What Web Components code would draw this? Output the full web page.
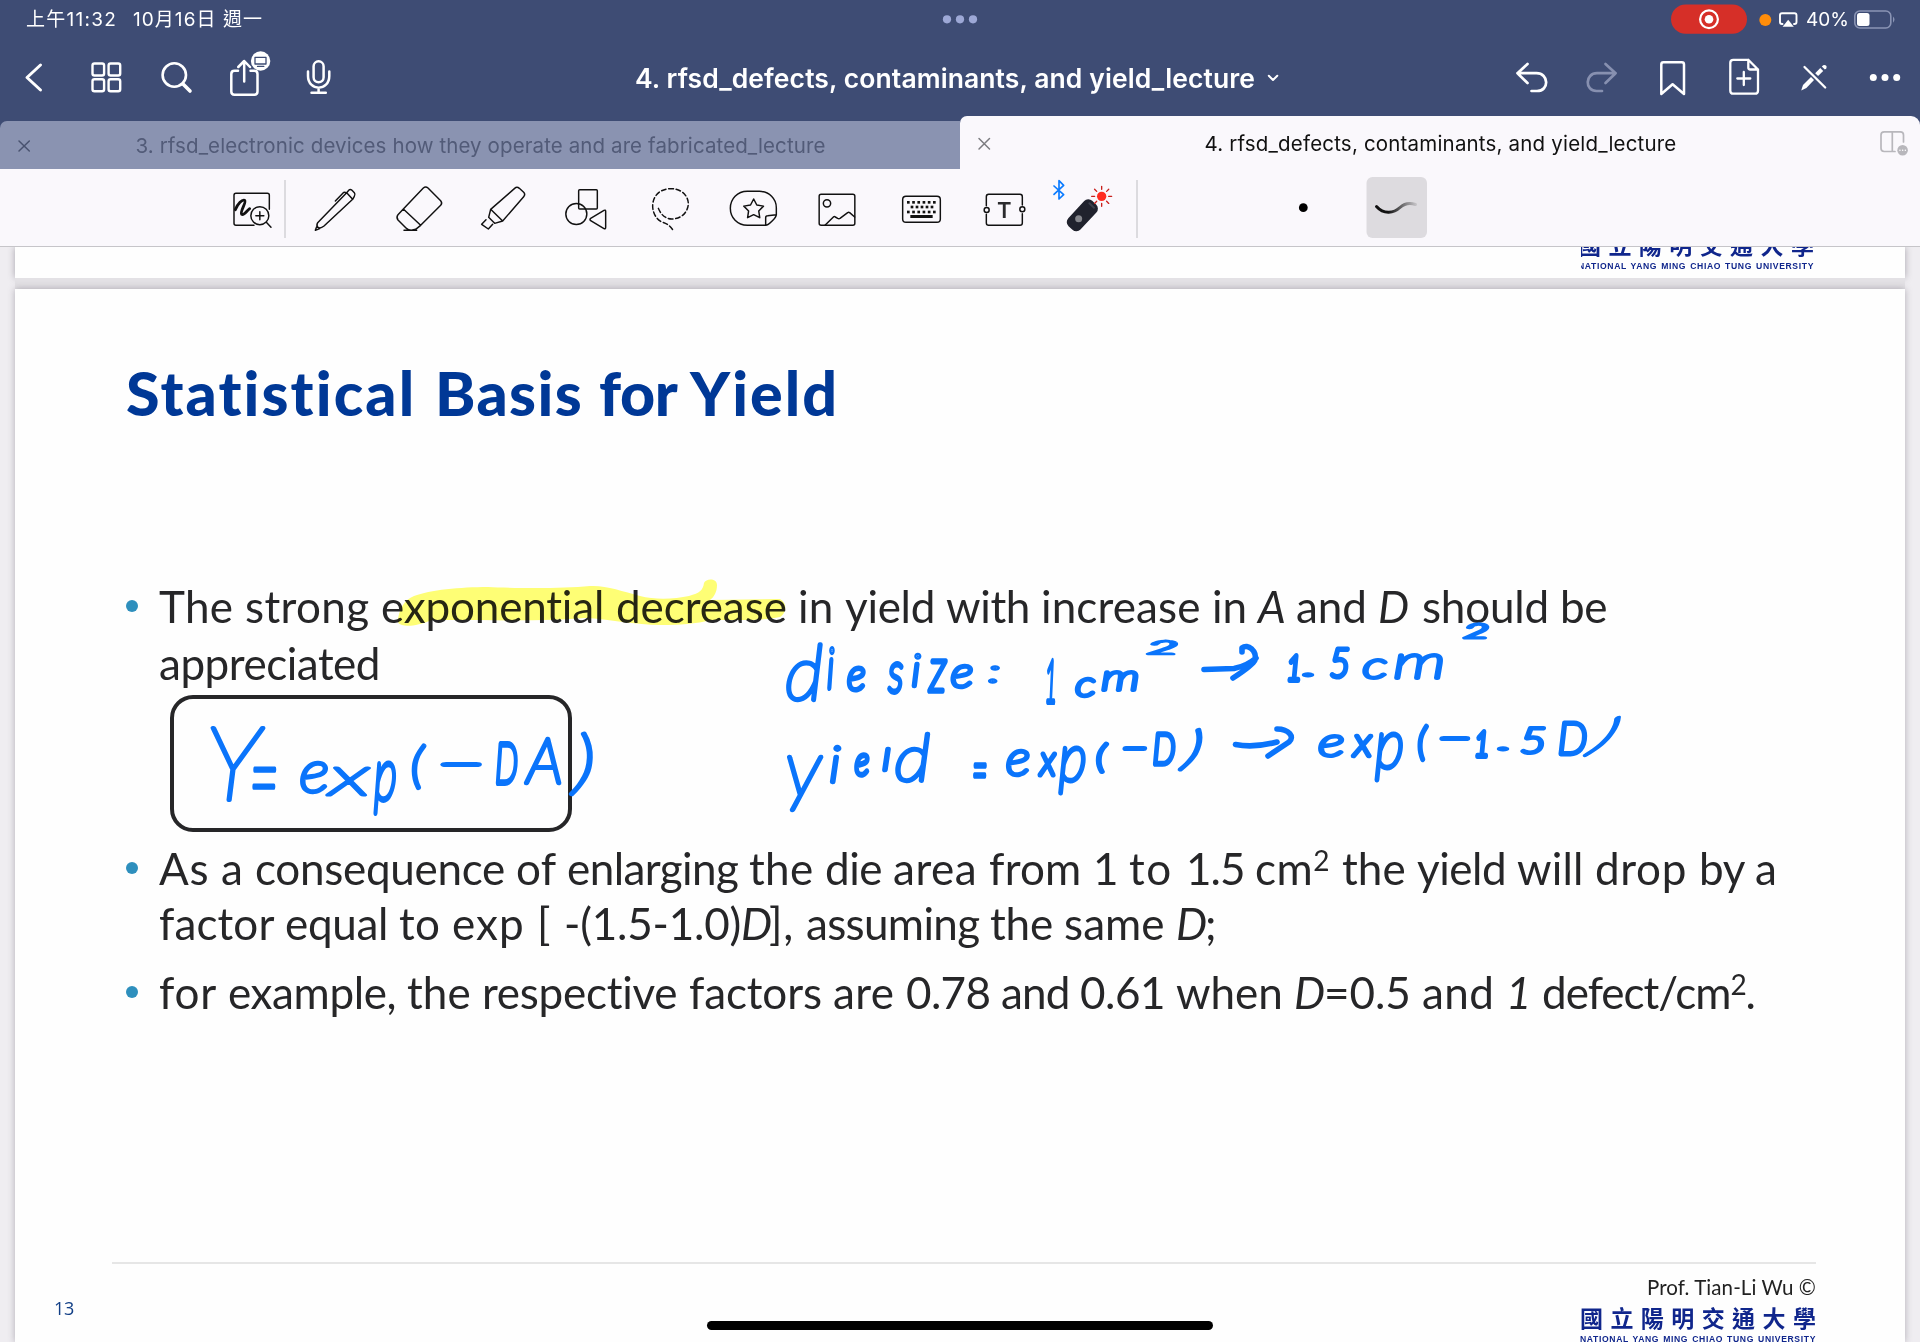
<!DOCTYPE html>
<html lang="zh-Hant">
<head>
<meta charset="utf-8">
<title>Notes</title>
<style>
html,body{margin:0;padding:0;height:100%;overflow:hidden;background:#f1eff3}
</style>
</head>
<body>
<note-app></note-app>
<script>
const define = (name, css, html, after) => customElements.define(name, class extends HTMLElement {
  connectedCallback() {
    if (this.shadowRoot) return;
    const root = this.attachShadow({mode: 'open'});
    root.innerHTML = `<style>${css}</style>${typeof html === 'function' ? html(this) : html}`;
    if (after) after(this, root);
  }
});

/* Text whose letter spacing is adjusted to fill its measure */
define('fit-text', `:host{display:block;white-space:pre;flex:none}span{display:inline-block;white-space:pre}`,
  '<span><slot></slot></span>', (el, root) => {
    const w = +el.getAttribute('w');
    el.style.width = w + 'px';
    const s = root.querySelector('span');
    const n = [...el.textContent].length;
    const nat = s.getBoundingClientRect().width;
    s.style.letterSpacing = ((w - nat) / n) + 'px';
  });

/* One line of slide text; each run starts at its own tab stop */
const LINES = {
  title: [['Statistical ',125],['Basis ',434],['for ',598],['Yield',689],['',838]],
  l1: [['The strong ',160],['exponential ',382],['decrease ',617],['in ',799],['yield ',846],['with ',947],['increase ',1042],['in ',1213],['A ',1259,1],['and ',1297],['D ',1379,1],['should ',1423],['be',1561],['',1608]],
  l2: [['appreciated',160],['',381]],
  l3: [['As ',160],['a ',222],['consequence ',256],['of ',517],['enlarging ',568],['the ',750],['die ',826],['area ',894],['from ',990],['1 ',1094],['to ',1130],['1.5 ',1187],['cm<sup>2</sup> ',1256],['the ',1343],['yield ',1418],['will ',1518],['drop ',1596],['by ',1700],['a',1756],['',1778]],
  l4: [['factor ',160],['equal ',286],['to ',400],['exp ',453],['[ ',538],['-(1.5-1.0)',565],['D',742,1],['], ',770],['assuming ',807],['the ',991],['same ',1065],['D',1177,1],[';',1206],['',1218]],
  l5: [['for ',160],['example, ',229],['the ',408],['respective ',483],['factors ',690],['are ',834],['0.78 ',907],['and ',1002],['0.61 ',1081],['when ',1177],['D',1295,1],['=0.5 ',1325],['and ',1423],['1 ',1507,1],['defect/cm<sup>2</sup>.',1543],['',1756]]
};
define('slide-line', `:host{display:flex;font:400 44px/52px Lato,sans-serif;color:#262628;height:52px}
  :host([run=title]){font:900 61px/72px Lato,sans-serif;color:#003896;height:72px}
  .i{font-style:italic}sup{font-size:28px;line-height:0;vertical-align:14px}`,
  el => {
    const L = LINES[el.getAttribute('run')];
    return L.slice(0, -1).map((r, i) => `<fit-text class="${r[2] ? 'i' : ''}" w="${L[i+1][1] - r[1]}">${r[0]}</fit-text>`).join('');
  });

define('bullet-item', `:host{display:grid;grid-template-columns:33px 1fr;}
  i{width:12px;height:12px;border-radius:50%;background:#2e8fbd;margin-top:20px}`,
  '<i></i><div><slot></slot></div>');

/* Icon cell: a slice of its bar, drawn in the bar's own coordinates */
const C4 = s => `<g transform="translate(150 170) scale(.33333)" stroke-width="4.4">${s}</g>`;
const C5 = s => `<g transform="translate(650 170) scale(.33333)" stroke-width="4.4">${s}</g>`;
const starPath = (cx, cy, R, r) => 'M' + Array.from({length: 10}, (_, i) => {
  const a = -Math.PI / 2 + i * Math.PI / 5, q = i % 2 ? r : R;
  return (cx + q * Math.cos(a)).toFixed(1) + ' ' + (cy + q * Math.sin(a)).toFixed(1);
}).join('L') + 'Z';
const keys = () => {
  let s = '';
  for (let i = 0; i < 6; i++) s += `<rect x="${771 + i*15.6}" y="93" width="8" height="8"/><rect x="${771 + i*15.6}" y="122" width="8" height="8"/>`;
  for (let i = 0; i < 5; i++) s += `<rect x="${782 + i*15}" y="107" width="8" height="8"/>`;
  return s;
};
const rays = () => Array.from({length: 8}, (_, i) => {
  const a = i * Math.PI / 4, c = Math.cos(a), s = Math.sin(a);
  return `M${1355 + 21*c} ${79 + 21*s}L${1355 + 30*c} ${79 + 30*s}`;
}).join('');
const ICONS = {
  back: '<path d="M40.5 65L27 77.5L40.5 90" stroke-width="3"/>',
  grid: '<g stroke-width="2.4"><rect x="92.5" y="63.5" width="11.6" height="12" rx="2"/><rect x="108.6" y="63.5" width="11.6" height="12" rx="2"/><rect x="92.5" y="79.3" width="11.6" height="12" rx="2"/><rect x="108.6" y="79.3" width="11.6" height="12" rx="2"/></g>',
  search: '<circle cx="174.3" cy="75" r="11.7" stroke-width="2.6"/><path d="M183 84L190 91" stroke-width="3.6"/>',
  share: '<path d="M238 70.8H234.5Q231.3 70.8 231.3 74V91.5Q231.3 94.7 234.5 94.7H254.3Q257.5 94.7 257.5 91.5V74Q257.5 70.8 254.3 70.8H250.5M244.2 81.5V61.5M238.3 67L244.2 61L250 67" stroke-width="2.5"/><circle cx="260.6" cy="61" r="9.7" fill="#fff" stroke="none"/><path d="M255 57.3H266V64H255ZM257.5 66.4H263.8" stroke="#3e4c74" stroke-width="1.3"/>',
  mic: '<rect x="313.6" y="61.3" width="10" height="21" rx="5" stroke-width="2.5"/><path d="M308 71.5V76C308 91.5 329.3 91.5 329.3 76V71.5M318.6 88V92.4M311.5 92.8H325.8" stroke-width="2.5"/>',
  chev: '<path d="M1268.8 75.8L1273 80L1277.3 75.8" stroke-width="2"/>',
  undo: '<path d="M1527.5 64L1517.5 73.2L1527.5 83M1517.5 73.2H1536.5C1549 73.2 1549.5 91 1537 91H1531.5" stroke-width="2.7"/>',
  redo: '<path d="M1605.5 64L1615.6 73.2L1605.5 83M1615.6 73.2H1597C1585 73.2 1584.5 91 1596.5 91H1602" stroke-width="2.7" stroke="#8790b0"/>',
  mark: '<path d="M1661.3 94V64.5Q1661.3 62.3 1663.5 62.3H1681.8Q1684 62.3 1684 64.5V94L1672.6 84.3Z" stroke-width="2.5"/>',
  add: '<path d="M1748.3 59.8H1733.3Q1730.3 59.8 1730.3 62.8V90.7Q1730.3 93.7 1733.3 93.7H1755Q1758 93.7 1758 90.7V69.5L1748.3 59.8V67.5Q1748.3 69.5 1750.3 69.5H1758M1743.8 72V85M1737.3 78.5H1750.3" stroke-width="2.3"/>',
  cross: '<path d="M1804.5 67L1825.2 87.5" stroke-width="2.3"/><g fill="#fff" stroke="none"><path d="M1801.2 90.4L1803 85L1811 77L1814 80L1806.4 88Z"/><path d="M1815.2 73.2L1820.3 68L1823.2 70.9L1818.1 76Z"/><path d="M1821.8 66.6L1823.2 65.2Q1824.8 64.4 1826 65.6Q1827.2 67 1826.3 68.2L1824.9 69.6Z"/></g>',
  dots: '<g fill="#fff" stroke="none"><circle cx="1873.3" cy="77.4" r="3.5"/><circle cx="1885" cy="77.4" r="3.5"/><circle cx="1896.7" cy="77.4" r="3.5"/></g>',
  multi: '<g fill="#9da8d6" stroke="none"><circle cx="947" cy="19.3" r="4.1"/><circle cx="960" cy="19.3" r="4.1"/><circle cx="973" cy="19.3" r="4.1"/></g>',
  rec: '<rect x="1671" y="4.5" width="76" height="29.3" rx="14.6" fill="#d62f28" stroke="none"/><circle cx="1709" cy="19.3" r="8.9" stroke-width="2.2"/><circle cx="1709" cy="19.3" r="4.3" fill="#fff" stroke="none"/><circle cx="1765.3" cy="19.9" r="6" fill="#ff8d0a" stroke="none"/><path d="M1782.5 24H1782Q1780 24 1780 22V15.3Q1780 13.3 1782 13.3H1794.5Q1796.5 13.3 1796.5 15.3V22Q1796.5 24 1794.5 24H1794" stroke-width="1.9"/><path d="M1788.2 19.8L1793.8 26.8H1782.6Z" fill="#fff" stroke="none"/>',
  bat: '<rect x="1854.8" y="11" width="36" height="17" rx="5" stroke="#8a94b4" stroke-width="1.6"/><rect x="1857" y="13" width="12.5" height="13" rx="2.5" fill="#fff" stroke="none"/><path d="M1893 16.5Q1896 19.5 1893 22.7Z" fill="#8a94b4" stroke="none"/>',
  x1: '<path d="M19 140.5L29.3 150.5M29.3 140.5L19 150.5" stroke="#49526f" stroke-width="1.5"/>',
  x2: '<path d="M979 138.5L989.5 149M989.5 138.5L979 149" stroke="#7c7c80" stroke-width="1.5"/>',
  win: '<g stroke="#b8b7bc" stroke-width="1.7"><path d="M1895 151.5H1884.2Q1881 151.5 1881 148.3V135Q1881 131.8 1884.2 131.8H1900.3Q1903.5 131.8 1903.5 135V142M1892.3 131.8V151.5"/><circle cx="1902.6" cy="150.2" r="5.3" fill="#b8b7bc" stroke="none"/><path d="M1899.9 150.2h.1M1902.6 150.2h.1M1905.3 150.2h.1" stroke="#fff" stroke-width="1.4"/></g>',
  zoompen: C4('<path d="M358 118V76Q358 70 352 70H258Q252 70 252 76V160Q252 166 258 166H312"/><path d="M256 119C264 100 276 88 284 91C291 96 268 126 275 133C283 137 290 122 299 116" stroke-width="8.5"/><circle cx="329.5" cy="137" r="27"/><path d="M329.5 125V149M317.5 137H341.5M349 157L363 172"/>'),
  pen: C4('<path d="M503 158L590 68L608 88L522 168Q511 177 504 172Q498 167 503 158ZM500 170L496 181L509 176M590 68L597 60Q601 56 606 61L613 68Q617 73 613 79L608 88M556 93L580 68Q584 65 590 70"/>'),
  eraser: C4('<path d="M760 117L820 54Q827 48 834 54L872 92Q878 99 872 106L812 166ZM760 117L744 134Q738 142 744 150L768 174Q775 181 784 181L797 178L812 166M762 181H800"/>'),
  hilite: C4('<path d="M1022 118L1094 55Q1101 49 1108 55L1121 67Q1127 73 1121 80L1058 153ZM1022 118L1016 142L1034 160L1058 153M1008 149L995 163L1015 177L1028 163"/>'),
  shapes: C4('<rect x="1286" y="59" width="56" height="58" rx="3"/><circle cx="1279" cy="132" r="31.5"/><path d="M1322 145L1362 121Q1367 119 1367 124V172Q1367 178 1362 176L1322 152Q1318 148 1322 145Z"/>'),
  lasso: C5('<path stroke-dasharray="14 8" d="M25 115Q38 146 65 147C95 147 115 125 115 100C113 72 90 56 62 56C30 56 8 78 8 108C8 130 20 148 35 156C52 160 60 168 68 179"/>'),
  sticker: C5(`<path d="M347 166H292C262 166 241 143 241 115C241 87 262 64 292 64H328C358 64 379 87 379 113V134C379 142 356 166 347 166V143Q347 137 353 137L379 134"/><path d="${starPath(311, 118, 31, 16)}"/>`),
  image: C5('<rect x="507.5" y="73" width="107" height="93" rx="6"/><circle cx="531" cy="100" r="11"/><path d="M525 166L551 140Q553 138 556 141L563 145Q567 147 570 145L593 128Q596 125 599 128L614 141"/>'),
  keyb: C5(`<rect x="758" y="79" width="113" height="78" rx="10"/><g fill="#111" stroke="none">${keys()}<rect x="781" y="135" width="67" height="9"/></g>`),
  textbox: C5('<path d="M1009 107V80Q1009 73 1016 73H1110Q1117 73 1117 80V105M1117 131V159Q1117 166 1110 166H1016Q1009 166 1009 159V133"/><circle cx="1010" cy="120" r="7.5"/><circle cx="1117" cy="118" r="7.5"/><text x="1063" y="144" text-anchor="middle" font-family="Inter" font-weight="600" font-size="66" fill="#2b2b2e" stroke="none">T</text>'),
  laser: C5(`<path d="M1212 48L1241 74L1227 87V32L1241 46L1212 73" stroke="#0a7bff" stroke-width="5"/><rect x="1245" y="111" width="104" height="50" rx="17" transform="rotate(-47 1297 136)" fill="#20222d" stroke="none"/><path d="M1318 100L1332 113" stroke="#3d404c" stroke-width="6"/><circle cx="1286" cy="146" r="10.5" fill="#85868c" stroke="none"/><circle cx="1355" cy="79" r="14" fill="#ff2d22" stroke="none"/><path d="${rays()}" stroke="#c8201c" stroke-width="4"/>`),
  dot: '<circle cx="1303.3" cy="207.7" r="4.4" fill="#000" stroke="none"/>',
  stroke: '<defs><linearGradient id="g" gradientUnits="userSpaceOnUse" x1="1376" y1="0" x2="1416" y2="0"><stop offset=".3" stop-color="#111"/><stop offset="1" stop-color="#111" stop-opacity=".12"/></linearGradient></defs><rect x="1366.5" y="177" width="60.5" height="61" rx="6" fill="#dddbdf" stroke="none"/><path d="M1376.5 206.5C1384 215 1394 213 1400 207.5C1405 203 1411 203 1415.5 204.5" stroke="url(#g)" stroke-width="3"/>'
};
define('bar-icon', `:host{display:block;flex:none}svg{display:block;fill:none;stroke:var(--ink,#fff);stroke-linecap:round;stroke-linejoin:round}`,
  el => {
    const [x0, x1, y, h] = el.getAttribute('cell').split(' ').map(Number);
    return `<svg width="${x1 - x0}" height="${h}" viewBox="${x0} ${y} ${x1 - x0} ${h}">${ICONS[el.getAttribute('name')]}</svg>`;
  });
const row = (y, h, list) => list.map(([n, a, b]) => `<bar-icon name="${n}" cell="${a} ${b} ${y} ${h}"></bar-icon>`).join('');

define('status-bar', `:host{display:flex;height:40px;align-items:flex-start;color:#fff;font:400 19px/40px Inter,"Noto Sans CJK TC",sans-serif}
  fit-text{height:40px;line-height:39px}.a{margin-left:26px}.b{margin-left:16px}.m{margin-left:667px}.r{margin-left:690px}.p{margin-left:6px;font-size:19px}.t{margin-left:1px}`,
  `<fit-text class="a" w="91">上午11:32</fit-text><fit-text class="b" w="130">10月16日 週一</fit-text>
  <bar-icon class="m" name="multi" cell="930 980 0 40"></bar-icon><bar-icon class="r" name="rec" cell="1670 1800 0 40"></bar-icon><fit-text class="p" w="43">40%</fit-text><bar-icon class="t" name="bat" cell="1850 1900 0 40"></bar-icon>`);

define('nav-bar', `:host{display:flex;height:76px;color:#fff}
  fit-text{margin:0 0 0 285px;font:600 26.5px/76px Inter,sans-serif}.c{margin-left:6px}.u{margin-left:215px}`,
  row(40, 76, [['back',0,60],['grid',60,145],['search',145,210],['share',210,285],['mic',285,350]]) +
  `<fit-text w="620">4. rfsd_defects, contaminants, and yield_lecture</fit-text>
  <bar-icon class="c" name="chev" cell="1261 1285 40 76"></bar-icon><bar-icon class="u" name="undo" cell="1500 1570 40 76"></bar-icon>` +
  row(40, 76, [['redo',1570,1635],['mark',1635,1705],['add',1705,1780],['cross',1780,1850],['dots',1850,1920]]));

define('tab-strip', `:host{display:flex;height:53px;align-items:flex-end}
  .off{display:flex;width:960px;height:48.5px;background:#8a93b1;border-radius:7px 0 0 0;color:#525b78;font:400 20.5px/49px Inter,sans-serif}
  .on{display:flex;width:960px;height:53px;background:#faf8fc;border-radius:7px 9px 0 0;color:#111;font:400 20.5px/55px Inter,sans-serif}
  .off fit-text{margin-left:95.5px}.on fit-text{margin-left:204.5px}.w{margin-left:184.5px}`,
  `<div class="off"><bar-icon name="x1" cell="0 40 120.5 48"></bar-icon><fit-text w="690">3. rfsd_electronic devices how they operate and are fabricated_lecture</fit-text></div>
  <div class="on"><bar-icon name="x2" cell="960 1000 116 53"></bar-icon><fit-text w="472">4. rfsd_defects, contaminants, and yield_lecture</fit-text><bar-icon class="w" name="win" cell="1861 1920 116 53"></bar-icon></div>`);

define('tool-bar', `:host{display:flex;height:77px;background:#faf8fc;border-bottom:1.5px solid #c6c5c9;--ink:#111;padding-left:220px}
  hr{border:0;margin:11px 0 0;width:2px;height:58px;background:#dcdbdf;flex:none}.d{margin-left:141px}`,
  row(169, 77, [['zoompen',220,284]]) + '<hr>' +
  row(169, 77, [['pen',286,380],['eraser',380,460],['hilite',460,540],['shapes',540,640],['lasso',640,710],['sticker',710,800],['image',800,880],['keyb',880,960],['textbox',960,1045],['laser',1045,1136]]) + '<hr>' +
  `<bar-icon class="d" name="dot" cell="1279 1340 169 77"></bar-icon><bar-icon name="stroke" cell="1340 1440 169 77"></bar-icon>`);

define('school-mark', `:host{display:block;width:236px;color:#10268c}
  .z{font:700 23px/28px "Noto Sans CJK TC",sans-serif;height:28px;display:flex;justify-content:space-between}
  .e{font:700 8.6px/11px "Liberation Sans",sans-serif;word-spacing:1px;margin-top:3.5px}`,
  `<div class="z">${[...'國立陽明交通大學'].map(c => `<span>${c}</span>`).join('')}</div><fit-text class="e" w="236">NATIONAL YANG MING CHIAO TUNG UNIVERSITY</fit-text>`);

/* Pen annotations: [glyph, left, top, right, bottom]; ' ' separates words */
const INK = [
  [150, 680, [['Y',180,137,348,367],['=',303,262,383,332],['e',450,240,535,343],['x',527,258,662,352],['p',668,240,740,408],['(',785,190,830,330],['-',880,237,988,267],['D',1035,180,1105,315],['A',1120,170,1235,317],[')',1255,152,1332,352]]],
  [760, 620, [['d',77,67,190,248],['i',200,80,226,212],['e',260,135,318,217],' ',['s',380,125,432,225],['i',455,95,485,205],['z',500,115,565,220],['e',572,128,640,208],[':',685,138,718,195],' ',['1',855,115,890,252],' ',['c',945,170,1008,237],['m',1025,148,1135,217],['2',1162,58,1250,110]]],
  [1180, 580, [' ',['1',322,220,362,308],['.',368,273,400,295],['5',448,200,510,300],['c',548,235,622,303],['m',643,215,788,300],['2',850,125,925,182],' ']],
  [760, 620, [['y',80,402,192,580],['i',210,370,245,493],['e',282,398,330,473],['l',367,377,392,458],['d',405,333,512,490],' ',['=',635,427,684,475],' ',['e',738,385,810,472],['x',832,395,892,473],['p',893,375,978,525],['(',1008,363,1047,463],['-',1090,370,1160,400],['D',1178,338,1248,440],[')',1253,320,1338,455]]],
  [1180, 580, [' ',['e',415,460,492,537],['x',512,460,580,535],['p',582,452,670,608],['(',712,432,747,545],['-',783,459,867,489],['1',885,447,925,535],['.',953,493,985,519],['5',1022,438,1098,528],['D',1135,420,1222,528],[')',1208,405,1335,533]]]
];
define('pen-layer', `:host{display:block;position:absolute;left:0;top:0;pointer-events:none}
  svg{display:block}text{font-family:Lato,sans-serif;font-style:italic;font-weight:100;fill:#0a74fb;stroke:#0a74fb;stroke-linejoin:round;stroke-linecap:round}`,
  () => {
    const ctx = document.createElement('canvas').getContext('2d');
    const T = 5.4;
    let out = '';
    for (const [ox, oy, glyphs] of INK) for (const g of glyphs) {
      if (g === ' ') { out += ' \n'; continue; }
      const [ch, a, b, c, d] = g, pad = 2.4;
      const L = ox + a/3 + pad, R = ox + c/3 - pad, t = oy + b/3 + pad, B = oy + d/3 - pad;
      ctx.font = 'italic 100 200px Lato';
      const m = ctx.measureText(ch);
      const asc = m.actualBoundingBoxAscent/200, desc = m.actualBoundingBoxDescent/200;
      const gl = -m.actualBoundingBoxLeft/200, gr = m.actualBoundingBoxRight/200;
      const flat = ch === '-';
      const fs = flat ? 60 : ch === '.' ? 34 : (B - t) / (asc + desc);
      let sx = (R - L) / ((gr - gl) * fs), k = 0;
      if (ch === ')' && sx > 1.3) { sx = 1.3; k = (R - L - (gr - gl)*fs*sx) / (B - t); }
      const by = flat || ch === '.' ? (t + B)/2 + (asc - desc)/2*fs : B - desc*fs;
      const x = L - gl*fs*sx + k*desc*fs;
      const sw = Math.max(.8, (T - fs*.014) / Math.pow(Math.max(sx, .6), flat ? 0 : .6));
      out += `<text font-size="${fs.toFixed(2)}" stroke-width="${sw.toFixed(2)}" transform="matrix(${sx.toFixed(4)} 0 ${(-k).toFixed(4)} 1 ${x.toFixed(2)} ${by.toFixed(2)})">${ch}</text>`;
    }
    return `<svg width="1920" height="1095" viewBox="0 247 1920 1095">${out}
      <g fill="none" stroke="#0a74fb" stroke-width="5.6" stroke-linecap="round" stroke-linejoin="round">
      <path d="M1204 669.5L1234 668.5Q1247 666 1256 658M1242 652V648C1248 643 1257 651 1255 660Q1253 665 1233 678"/>
      <path d="M1235.5 744.5C1248 747 1262 746 1277 742M1277 729C1289 729 1295 737 1289 742L1268 756"/></g></svg>`;
  });

define('highlight-mark', `:host{display:block;position:absolute;left:0;top:0;mix-blend-mode:multiply}svg{display:block}`,
  `<svg width="1920" height="1095" viewBox="0 247 1920 1095"><path fill="#ffff75" d="M398 619C400 608 404 600 414 596C430 590 460 587 488 587C510 588 560 589 590 586C605 585 622 591 640 596C655 600 675 599 689 596C700 593 703 590 704 583C706 578 717 578 717 585C717 592 714 597 710 600L780 599C788 603 786 614 780 617C760 621 735 620 712 620C695 624 680 625 661 625C635 625 610 619 585 618C560 620 520 621 480 620L432 620C420 625 408 627 402 625Q397 624 398 619Z"/></svg>`);

define('slide-page', `:host{display:block;box-sizing:border-box;background:#fefefe;height:1053px;margin:0 15px;padding:68px 89px 0 111px;box-shadow:0 0 7px rgba(60,55,70,.35)}
  bullet-item{margin-left:0}.b1{margin-top:151px}.g1{margin-top:5px}
  .frame{box-sizing:border-box;width:402px;height:137px;border:4px solid #262628;border-radius:23px;margin:6px 0 0 43.5px}
  .b2{margin-top:10px}.g2{margin-top:3px}.b3{margin-top:17px}
  .rule{height:2px;background:#e6e6e6;margin:244px 0 0 -14px}
  footer{display:flex;justify-content:space-between;align-items:flex-start;margin-left:-72px}
  .n{font:400 18px/24px "Open Sans",sans-serif;color:#123f86;margin-top:32px}
  .r{display:flex;flex-direction:column;align-items:flex-end;margin-top:9px}
  .p{font:400 20.5px/28px Lato,sans-serif;color:#222}school-mark{margin-top:1.5px}
  .g1,.g2{display:flex}`,
  `<slide-line run="title"></slide-line>
  <bullet-item class="b1"><slide-line run="l1"></slide-line><slide-line class="g1" run="l2"></slide-line></bullet-item>
  <div class="frame"></div>
  <bullet-item class="b2"><slide-line run="l3"></slide-line><slide-line class="g2" run="l4"></slide-line></bullet-item>
  <bullet-item class="b3"><slide-line run="l5"></slide-line></bullet-item>
  <div class="rule"></div>
  <footer><fit-text class="n" w="20">13</fit-text><div class="r"><fit-text class="p" w="169">Prof. Tian-Li Wu ©</fit-text><school-mark></school-mark></div></footer>`);

define('note-canvas', `:host{display:block;position:relative;overflow:hidden;flex:1;background:#efedf1}
  .prev{box-sizing:border-box;height:31px;margin:0 15px;background:#fefefe;box-shadow:0 0 7px rgba(60,55,70,.4);display:flex;justify-content:flex-end;align-items:flex-end;padding:0 91px 6px 0;overflow:visible}
  .clip{overflow:hidden;height:25px;width:233px;display:flex;align-items:flex-end;justify-content:flex-end}
  .clip school-mark{flex:none}
  .gap{height:11px;background:#e3e1e5;margin:0 15px}
  .home{position:absolute;left:707px;top:1074px;width:506px;height:9px;border-radius:5px;background:#000}`,
  `<div class="prev"><div class="clip"><school-mark></school-mark></div></div><div class="gap"></div><slide-page></slide-page>
  <highlight-mark></highlight-mark><pen-layer></pen-layer><div class="home"></div>`);

define('note-app', `:host{display:flex;flex-direction:column;width:1920px;height:1342px;overflow:hidden;background:#3e4c74}`,
  '<status-bar></status-bar><nav-bar></nav-bar><tab-strip></tab-strip><tool-bar></tool-bar><note-canvas></note-canvas>');
</script>
</body>
</html>
